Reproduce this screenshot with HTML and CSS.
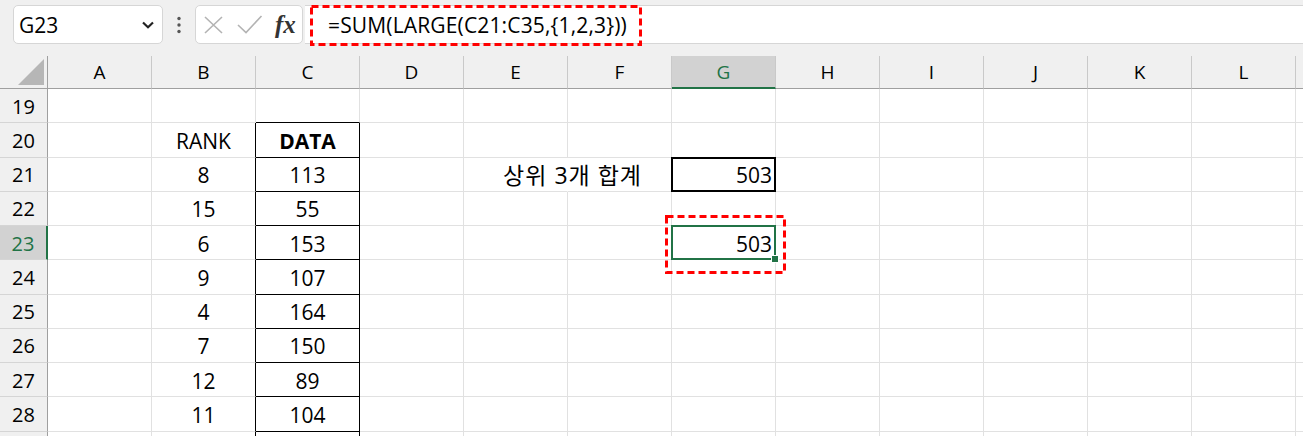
FILE: index.html
```html
<!DOCTYPE html>
<html lang="ko">
<head>
    <meta charset="UTF-8">
    <title>LARGE 배열 합계</title>
    <link rel="stylesheet" href="styles.css">
</head>
<body>
    <div class="toolbar">
        <div class="namebox">
            <span>G23</span>
            <svg width="12" height="8" viewBox="0 0 12 8"><path d="M1 1.5 L6 6.2 L11 1.5" fill="none" stroke="#222" stroke-width="2.2"/></svg>
        </div>
        <div class="dots">
            <svg width="6" height="18" viewBox="0 0 6 18"><circle cx="3" cy="2.5" r="1.7"/><circle cx="3" cy="9" r="1.7"/><circle cx="3" cy="15.5" r="1.7"/></svg>
        </div>
        <div class="fxbox">
            <svg class="ico-x" width="19" height="18" viewBox="0 0 19 18"><path d="M1 1 L18 17 M18 1 L1 17" stroke="#b3b3b3" stroke-width="1.6" fill="none"/></svg>
            <svg class="ico-ok" width="26" height="19" viewBox="0 0 26 19"><path d="M1 10 L9 17.5 L24.5 1" stroke="#b3b3b3" stroke-width="1.6" fill="none"/></svg>
            <span class="fx">fx</span>
        </div>
        <div class="formula">
            =SUM(LARGE(C21:C35,{1,2,3}))
            <svg class="mark mark-formula" width="332" height="41" viewBox="0 0 332 41"><rect x="1.5" y="1.5" width="329" height="38" fill="none" stroke="#f00" stroke-width="3" stroke-dasharray="7 4"/></svg>
        </div>
    </div>

    <div class="sheet">
        <div class="head">
            <div class="corner"><svg width="26" height="26" viewBox="0 0 26 26"><polygon points="26,0 26,26 0,26" fill="#b6b6b6"/></svg></div>
            <div>A</div><div>B</div><div>C</div><div>D</div><div>E</div><div>F</div>
            <div class="on">G</div><div>H</div><div>I</div><div>J</div><div>K</div><div>L</div><div></div>
        </div>

        <div class="row">
            <div class="rh">19</div>
            <div></div><div></div><div class="bb"></div><div></div><div></div><div></div>
            <div></div><div></div><div></div><div></div><div></div><div></div><div></div>
        </div>
        <div class="row">
            <div class="rh">20</div>
            <div></div><div class="br">RANK</div><div class="bx bold">DATA</div><div></div><div></div><div></div>
            <div></div><div></div><div></div><div></div><div></div><div></div><div></div>
        </div>
        <div class="row">
            <div class="rh">21</div>
            <div></div><div class="br">8</div><div class="bx">113</div><div></div><div class="spill"></div>
            <div class="label">상위 3개 합계</div>
            <div class="num boxed">503</div><div></div><div></div><div></div><div></div><div></div><div></div>
        </div>
        <div class="row">
            <div class="rh">22</div>
            <div></div><div class="br">15</div><div class="bx">55</div><div></div><div></div><div></div>
            <div></div><div></div><div></div><div></div><div></div><div></div><div></div>
        </div>
        <div class="row">
            <div class="rh on">23</div>
            <div></div><div class="br">6</div><div class="bx">153</div><div></div><div></div><div></div>
            <div class="num active">503
                <span class="handle"></span>
                <svg class="mark mark-cell" width="121" height="59" viewBox="0 0 121 59"><rect x="1.5" y="1.5" width="118" height="56" fill="none" stroke="#f00" stroke-width="3" stroke-dasharray="7 4"/></svg>
            </div>
            <div></div><div></div><div></div><div></div><div></div><div></div>
        </div>
        <div class="row">
            <div class="rh">24</div>
            <div></div><div class="br">9</div><div class="bx">107</div><div></div><div></div><div></div>
            <div></div><div></div><div></div><div></div><div></div><div></div><div></div>
        </div>
        <div class="row">
            <div class="rh">25</div>
            <div></div><div class="br">4</div><div class="bx">164</div><div></div><div></div><div></div>
            <div></div><div></div><div></div><div></div><div></div><div></div><div></div>
        </div>
        <div class="row">
            <div class="rh">26</div>
            <div></div><div class="br">7</div><div class="bx">150</div><div></div><div></div><div></div>
            <div></div><div></div><div></div><div></div><div></div><div></div><div></div>
        </div>
        <div class="row">
            <div class="rh">27</div>
            <div></div><div class="br">12</div><div class="bx">89</div><div></div><div></div><div></div>
            <div></div><div></div><div></div><div></div><div></div><div></div><div></div>
        </div>
        <div class="row">
            <div class="rh">28</div>
            <div></div><div class="br">11</div><div class="bx">104</div><div></div><div></div><div></div>
            <div></div><div></div><div></div><div></div><div></div><div></div><div></div>
        </div>
        <div class="row">
            <div class="rh"></div>
            <div></div><div class="br"></div><div class="bx"></div><div></div><div></div><div></div>
            <div></div><div></div><div></div><div></div><div></div><div></div><div></div>
        </div>
    </div>
</body>
</html>
```

FILE: styles.css
```css
body {
    margin: 0;
    width: 1303px;
    height: 436px;
    overflow: hidden;
    background-color: #fff;
    font-family: "Open Sans", "Noto Sans CJK KR", sans-serif;
    color: #000;
}

/* formula bar */
.toolbar {
    height: 56px;
    box-sizing: border-box;
    padding: 5px 0 0 13px;
    background-color: #f0f0f0;
    display: flex;
    align-items: flex-start;
}

.namebox {
    width: 150px;
    height: 39px;
    box-sizing: border-box;
    border: 1px solid #d6d6d6;
    border-radius: 5px;
    background-color: #fff;
    display: flex;
    align-items: center;
    justify-content: space-between;
    padding: 0 8px 0 5px;
    font-size: 21px;
}

.dots {
    width: 32px;
    height: 39px;
    display: flex;
    align-items: center;
    justify-content: center;
    fill: #555;
}

.fxbox {
    width: 108px;
    height: 39px;
    box-sizing: border-box;
    border: 1px solid #d6d6d6;
    border-radius: 5px;
    background-color: #fff;
    display: flex;
    align-items: center;
}

.ico-x {
    margin-left: 8px;
}

.ico-ok {
    margin-left: 14px;
}

.fx {
    margin-left: 12px;
    font-family: "Liberation Serif", serif;
    font-style: italic;
    font-weight: bold;
    font-size: 25px;
    color: #333;
    line-height: 1;
}

.formula {
    flex: 1;
    height: 39px;
    box-sizing: border-box;
    margin-left: 2px;
    padding-left: 23px;
    background-color: #fff;
    border-top: 1px solid #d6d6d6;
    border-bottom: 1px solid #d6d6d6;
    display: flex;
    align-items: center;
    font-size: 21px;
    letter-spacing: 0.15px;
    position: relative;
}

.mark {
    position: absolute;
    pointer-events: none;
}

.mark-formula {
    left: 5px;
    top: -1px;
}

/* sheet grid */
.sheet {
    width: 1303px;
    overflow: hidden;
}

.head,
.row {
    display: grid;
    grid-template-columns: 48px repeat(13, 104px);
}

.head {
    height: 33px;
    background-color: #f0f0f0;
}

.head > div {
    box-sizing: border-box;
    border-right: 1px solid #c9c9c9;
    border-bottom: 1px solid #9f9f9f;
    display: flex;
    align-items: center;
    justify-content: center;
    font-size: 19px;
}

.head > .corner {
    justify-content: flex-end;
    align-items: flex-end;
    padding: 0 3px 3px 0;
    border-right-color: #9f9f9f;
}

.head > .on {
    background-color: #d2d2d2;
    border-bottom: 2px solid #217346;
    color: #217346;
}

.row {
    height: 34.25px;
    grid-template-rows: 34.25px;
}

.row > div {
    box-sizing: border-box;
    border-right: 1px solid #e1e1e1;
    border-bottom: 1px solid #e1e1e1;
    display: flex;
    align-items: center;
    justify-content: center;
    padding-top: 2px;
    font-size: 21px;
    line-height: 28px;
    white-space: nowrap;
    position: relative;
}

.row > .rh {
    background-color: #f0f0f0;
    border-right-color: #9f9f9f;
    border-bottom-color: #d5d5d5;
    font-size: 20px;
}

.row > .rh.on {
    background-color: #d2d2d2;
    border-right: 2px solid #217346;
    color: #217346;
}

/* cell borders */
.row > .bb {
    border-bottom-color: #000;
}

.row > .br {
    border-right-color: #000;
}

.row > .bx {
    border-right-color: #000;
    border-bottom-color: #000;
}

.bold {
    font-weight: bold;
}

.row > .spill {
    border-right-color: transparent;
}

.row > .label {
    justify-content: flex-end;
    padding-right: 29px;
    font-size: 23px;
    letter-spacing: 1px;
}

.row > .num {
    justify-content: flex-end;
    padding-right: 3px;
}

.boxed::after {
    content: "";
    position: absolute;
    top: -1px;
    left: -1px;
    right: -1px;
    bottom: -1px;
    border: 2px solid #000;
}

.active::after {
    content: "";
    position: absolute;
    top: -1px;
    left: -1px;
    right: -1px;
    bottom: -1px;
    border: 2px solid #217346;
}

.handle {
    position: absolute;
    right: -4px;
    bottom: -4px;
    width: 6px;
    height: 6px;
    background-color: #217346;
    border: 1px solid #fff;
    z-index: 1;
}

.mark-cell {
    left: -7px;
    top: -11px;
    z-index: 2;
}
```
